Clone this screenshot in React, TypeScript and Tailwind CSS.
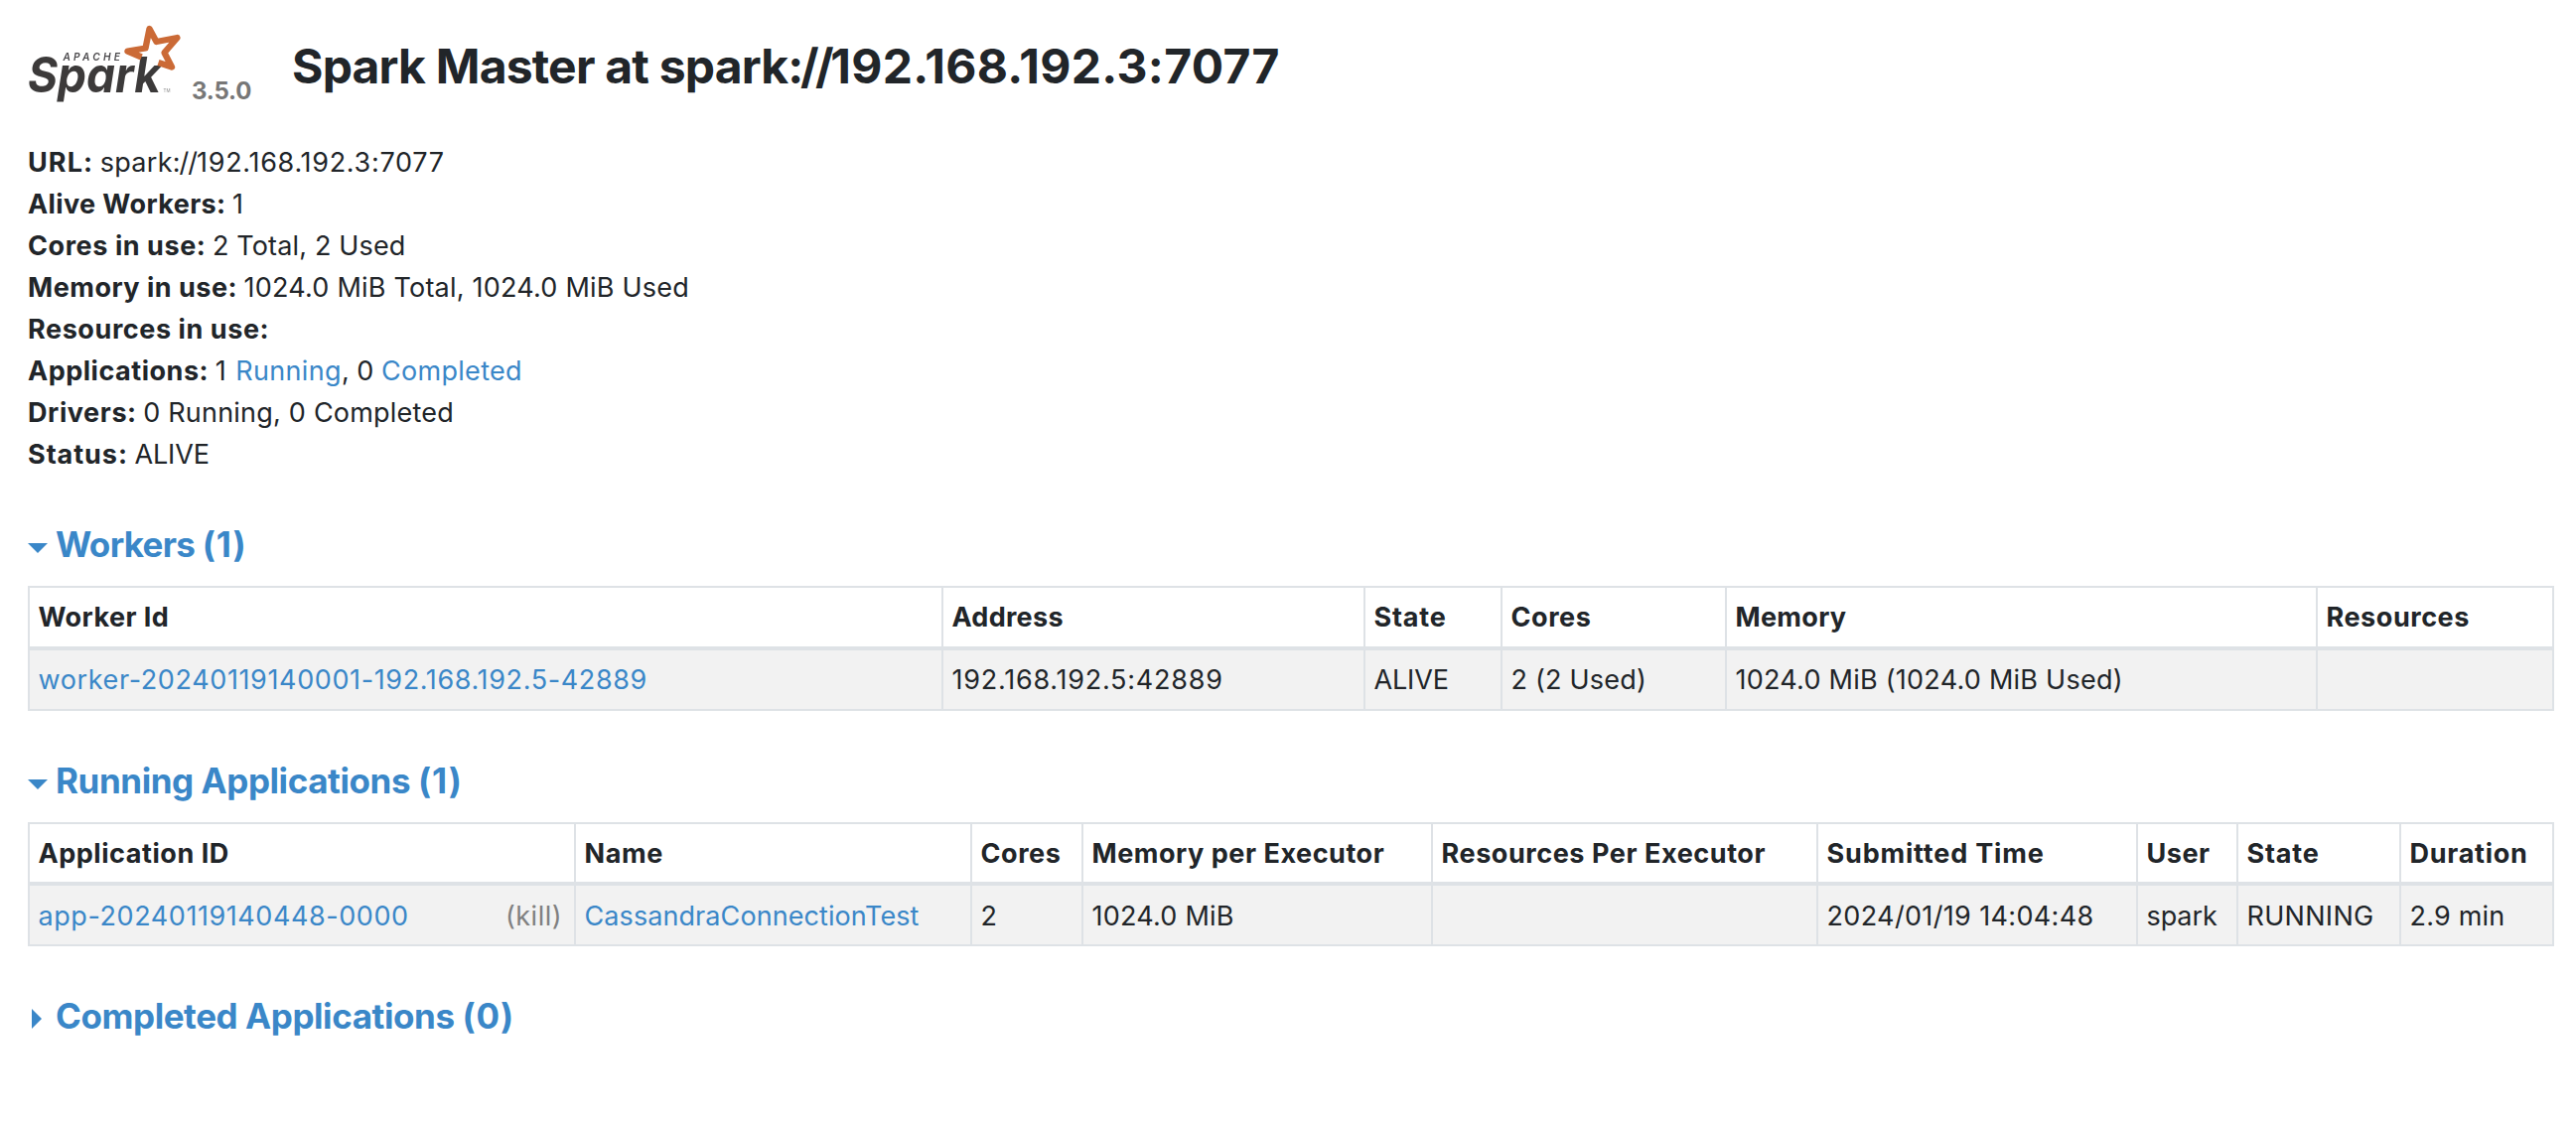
import type { ReactNode } from "react";

function SparkLogo() {
  return (
    <svg width="160" height="90" viewBox="24 20 160 90" className="block blur-[0.6px]" role="img" aria-label="Apache Spark">
      <text x="63.500" y="60.800" fontFamily="Inter, sans-serif" fontWeight="600" fontStyle="italic" fontSize="10.2" textLength="57.500" lengthAdjust="spacing" fill="#4a484b">
        APACHE
      </text>
      <text x="28" y="93.200" fontFamily="Inter, sans-serif" fontWeight="700" fontStyle="italic" fontSize="49" textLength="134" lengthAdjust="spacingAndGlyphs" fill="#3c3a3a">
        Spark
      </text>
      <text x="164.500" y="93" fontFamily="Inter, sans-serif" fontSize="4.500" fill="#8b8b8b">
        TM
      </text>
      <path
        d="M142.500 57.500 L128.500 51.500 L146.500 48.500 L150.500 29 L157.500 42 L178.500 38 L165.500 53 L173 67.500 L159.500 63"
        fill="none"
        stroke="#cb6a36"
        strokeWidth="6.300"
        strokeLinejoin="round"
      />
    </svg>
  );
}

function Line({ label, tracking, children }: { label: string; tracking: string; children?: ReactNode }) {
  return (
    <li className="flex h-[42px] items-baseline gap-[6.5px] whitespace-pre">
      <strong className={`font-bold ${tracking}`}>{label}</strong>
      {children}
    </li>
  );
}

function Heading({ open, title, count, tracking, className = "" }: { open: boolean; title: string; count: number; tracking: string; className?: string }) {
  return (
    <h4 className={`flex h-[42px] text-[35px] leading-[42px] font-bold text-[#3a87c8] ${className}`}>
      <span className="block w-[28px] shrink-0">
        {open ? (
          <span className="mt-[20px] block h-0 w-0 border-x-[10px] border-t-[10px] border-x-transparent border-t-[#3a87c8]" />
        ) : (
          <span className="mt-[14px] ml-[4px] block h-0 w-0 border-y-[10px] border-l-[10px] border-y-transparent border-l-[#3a87c8]" />
        )}
      </span>
      <a className={tracking}>
        {title} <span className="tracking-[0.9px]">({count})</span>
      </a>
    </h4>
  );
}

type Cell = { text: string; tracking?: string; link?: boolean; kill?: boolean };

function Table({ cols, head, row, headClass, rowClass }: { cols: string; head: Cell[]; row: Cell[]; headClass: string; rowClass: string }) {
  return (
    <div className="mt-[21px] w-[2544px] border-y-2 border-r-2 border-[#dee2e6] whitespace-nowrap">
      <div className={`grid border-b-4 border-[#dee2e6] font-bold ${cols}`}>
        {head.map((c, i) => (
          <div key={i} className={`border-l-2 border-[#dee2e6] pl-[8.5px] ${headClass}`}>
            <span className={c.tracking}>{c.text}</span>
          </div>
        ))}
      </div>
      <div className={`grid bg-[#f2f2f2] ${cols}`}>
        {row.map((c, i) => (
          <div key={i} className={`flex justify-between border-l-2 border-[#dee2e6] pr-[12px] pl-[8.5px] ${rowClass}`}>
            <span className={`${c.tracking ?? ""} ${c.link ? "text-[#3a87c8]" : ""}`}>{c.text}</span>
            {c.kill && <a className="tracking-[0.48px] text-[#808080]">(kill)</a>}
          </div>
        ))}
      </div>
    </div>
  );
}

const workerHead: Cell[] = [
  { text: "Worker Id", tracking: "tracking-[0.44px]" },
  { text: "Address", tracking: "tracking-[0.3px]" },
  { text: "State", tracking: "tracking-[0.8px]" },
  { text: "Cores", tracking: "tracking-[0.56px]" },
  { text: "Memory", tracking: "tracking-[0.3px]" },
  { text: "Resources", tracking: "tracking-[0.56px]" },
];
const workerRow: Cell[] = [
  { text: "worker-20240119140001-192.168.192.5-42889", tracking: "tracking-[0.62px]", link: true },
  { text: "192.168.192.5:42889", tracking: "tracking-[0.76px]" },
  { text: "ALIVE", tracking: "tracking-[-0.15px]" },
  { text: "2 (2 Used)", tracking: "tracking-[0.2px]" },
  { text: "1024.0 MiB (1024.0 MiB Used)", tracking: "tracking-[0.25px]" },
  { text: "" },
];
const appHead: Cell[] = [
  { text: "Application ID", tracking: "tracking-[0.55px]" },
  { text: "Name", tracking: "tracking-[0.63px]" },
  { text: "Cores", tracking: "tracking-[0.56px]" },
  { text: "Memory per Executor", tracking: "tracking-[0.54px]" },
  { text: "Resources Per Executor", tracking: "tracking-[0.57px]" },
  { text: "Submitted Time", tracking: "tracking-[0.82px]" },
  { text: "User", tracking: "tracking-[0.5px]" },
  { text: "State", tracking: "tracking-[0.8px]" },
  { text: "Duration", tracking: "tracking-[0.75px]" },
];
const appRow: Cell[] = [
  { text: "app-20240119140448-0000", tracking: "tracking-[0.57px]", link: true, kill: true },
  { text: "CassandraConnectionTest", tracking: "tracking-[0.08px]", link: true },
  { text: "2" },
  { text: "1024.0 MiB", tracking: "tracking-[0.23px]" },
  { text: "" },
  { text: "2024/01/19 14:04:48", tracking: "tracking-[0.35px]" },
  { text: "spark", tracking: "tracking-[-0.1px]" },
  { text: "RUNNING", tracking: "tracking-[0.3px]" },
  { text: "2.9 min", tracking: "tracking-[0.2px]" },
];

export default function App() {
  return (
    <div className="min-h-[1134px] bg-white pl-[28px] font-['Inter',sans-serif] text-[27px] leading-[42px] text-[#212529]">
      <header className="flex h-[143px] pt-[20px]">
        <div className="-ml-[4px] w-[160px] shrink-0">
          <SparkLogo />
        </div>
        <span className="mt-[51px] ml-[9px] w-[100px] shrink-0 text-[24px] font-bold tracking-[-0.2px] text-[#777777]">3.5.0</span>
        <h3 className="mt-[18px] ml-[1px] text-[48px] leading-[58px] font-bold tracking-[-0.8px] whitespace-nowrap">
          Spark Master at spark<span className="tracking-[-3.4px]">://</span>
          <span className="tracking-[0.3px]">192.168.192.3:7077</span>
        </h3>
      </header>

      <ul>
        <Line label="URL:" tracking="tracking-[1.1px]">
          <span className="tracking-[0.3px]">
            spark<span className="tracking-[-1px]">://</span>
            <span className="tracking-[0.7px]">192.168.192.3:7077</span>
          </span>
        </Line>
        <Line label="Alive Workers:" tracking="tracking-[0.4px]">
          <span>1</span>
        </Line>
        <Line label="Cores in use:" tracking="tracking-[0.57px]">
          <span className="tracking-[0.15px]">2 Total, 2 Used</span>
        </Line>
        <Line label="Memory in use:" tracking="tracking-[0.5px]">
          <span className="tracking-[0.22px]">1024.0 MiB Total, 1024.0 MiB Used</span>
        </Line>
        <Line label="Resources in use:" tracking="tracking-[0.58px]" />
        <Line label="Applications:" tracking="tracking-[0.52px]">
          <span>
            <span className="tracking-[1px]">1 </span>
            <a className="tracking-[0.35px] text-[#3a87c8]">Running</a>, 0 <a className="tracking-[0.3px] text-[#3a87c8]">Completed</a>
          </span>
        </Line>
        <Line label="Drivers:" tracking="tracking-[0.6px]">
          <span className="tracking-[0.21px]">0 Running, 0 Completed</span>
        </Line>
        <Line label="Status:" tracking="tracking-[0.95px]">
          <span className="tracking-[-0.1px]">ALIVE</span>
        </Line>
      </ul>

      <Heading open title="Workers" count={1} tracking="tracking-[-0.7px]" className="mt-[48px]" />
      <Table
        cols="grid-cols-[920px_425px_138px_226px_595px_238px]"
        head={workerHead}
        row={workerRow}
        headClass="h-[59px] pt-[9px]"
        rowClass="h-[59px] pt-[9px]"
      />

      <Heading open title="Running Applications" count={1} tracking="tracking-[-0.43px]" className="mt-[49px]" />
      <Table
        cols="grid-cols-[550px_399px_112px_352px_388px_322px_101px_164px_154px]"
        head={appHead}
        row={appRow}
        headClass="h-[58px] pt-[9px]"
        rowClass="h-[59px] pt-[10px]"
      />

      <Heading open={false} title="Completed Applications" count={0} tracking="tracking-[-0.43px]" className="mt-[49px]" />
    </div>
  );
}
